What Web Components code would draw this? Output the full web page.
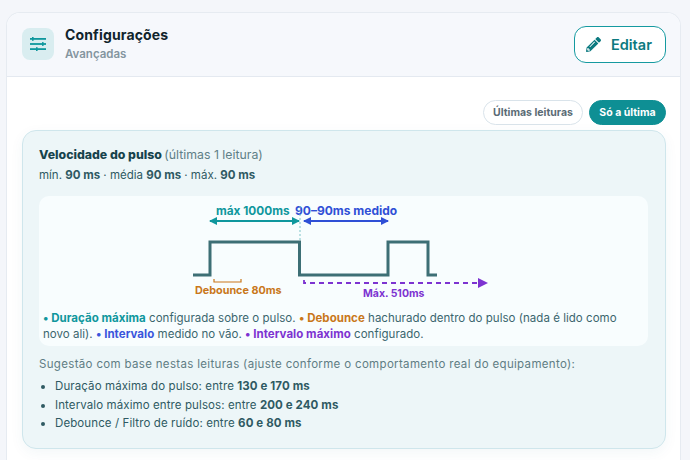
<!doctype html>
<html lang="pt">
<head>
<meta charset="utf-8">
<title>Configurações</title>
<style>
  html, body { margin: 0; height: 100%; overflow: hidden; }
  body {
    background: #f4f6fa;
    font-family: Inter, "Noto Sans", sans-serif;
    color: #1a444c;
    padding: 12px 9px 0 6px;
    box-sizing: border-box;
  }
  b { font-weight: 700; }
</style>
</head>
<body>
<settings-card>
  <card-header slot="header" title="Configurações" subtitle="Avançadas" action="Editar"></card-header>
  <pill-toggle first="Últimas leituras" second="Só a última"></pill-toggle>
  <pulse-panel>
    <span slot="title">Velocidade do pulso</span>
    <span slot="note">(últimas 1 leitura)</span>
    <span slot="stats">mín. <b>90 ms</b> · média <b>90 ms</b> · máx. <b>90 ms</b></span>
    <pulse-diagram slot="diagram"></pulse-diagram>
    <span slot="hint" style="letter-spacing:.33px">Sugestão com base nestas leituras (ajuste conforme o comportamento real do equipamento):</span>
    <ul slot="list" style="margin:0;padding:0 0 0 16px;list-style:disc;letter-spacing:.1px">
      <li style="margin-bottom:2.5px">Duração máxima do pulso: entre <b>130 e 170 ms</b></li>
      <li style="margin-bottom:2.5px">Intervalo máximo entre pulsos: entre <b>200 e 240 ms</b></li>
      <li>Debounce / Filtro de ruído: entre <b>60 e 80 ms</b></li>
    </ul>
  </pulse-panel>
</settings-card>

<script>
class SettingsCard extends HTMLElement {
  constructor() {
    super()
    this.attachShadow({ mode: 'open' })
    this.shadowRoot.innerHTML = `
      <style>
        :host {
          display: block;
          height: 448px;
          box-sizing: border-box;
          background: #fff;
          border: 1px solid #e6ebf1;
          border-bottom: none;
          border-radius: 14px 14px 0 0;
          overflow: hidden;
        }
        header {
          height: 63px;
          background: #f6f8fc;
          border-bottom: 1px solid #e4e9f0;
        }
        main { padding: 23px 14px 0 15px; }
      </style>
      <header><slot name="header"></slot></header>
      <main><slot></slot></main>
    `
  }
}

class CardHeader extends HTMLElement {
  constructor() {
    super()
    this.attachShadow({ mode: 'open' })
    this.shadowRoot.innerHTML = `
      <style>
        :host {
          display: flex;
          align-items: center;
          height: 100%;
          box-sizing: border-box;
          padding: 0 14px 1px 15px;
        }
        .icon {
          width: 32px;
          height: 32px;
          border-radius: 8px;
          background: #d9edf0;
          display: grid;
          place-items: center;
          margin-right: 11px;
        }
        .text { flex: 1; display: flex; flex-direction: column; }
        h1 {
          margin: 0;
          font-size: 14px;
          line-height: 18px;
          font-weight: 700;
          color: #10242c;
          letter-spacing: .15px;
        }
        small {
          margin-top: 3px;
          font-size: 11.5px;
          line-height: 15px;
          font-weight: 600;
          color: #84959f;
        }
        button {
          display: flex;
          align-items: center;
          gap: 10px;
          width: 92px;
          height: 37px;
          padding: 0 0 0 11px;
          box-sizing: border-box;
          background: #fff;
          border: 1.5px solid #159aa0;
          border-radius: 12px;
          font: 600 14.5px Inter, sans-serif;
          color: #0c7a80;
        }
      </style>
      <div class="icon">
        <svg width="18" height="16" viewBox="0 0 18 16" fill="#0f979d">
          <rect x="1" y="2" width="16" height="1.8"/><rect x="3" y="1" width="1.6" height="3.8"/>
          <rect x="1" y="7.100" width="16" height="1.8"/><rect x="13" y="6.100" width="1.6" height="3.800"/>
          <rect x="1" y="12.200" width="16" height="1.8"/><rect x="7" y="11.200" width="1.6" height="3.800"/>
        </svg>
      </div>
      <div class="text">
        <h1>${this.getAttribute('title')}</h1>
        <small>${this.getAttribute('subtitle')}</small>
      </div>
      <button>
        <svg width="15" height="15" viewBox="0 0 512 512" fill="#0c7a80"><path d="M497.9 142.1l-46.1 46.1c-4.7 4.7-12.3 4.7-17 0l-111-111c-4.7-4.7-4.7-12.3 0-17l46.1-46.1c18.7-18.7 49.1-18.7 67.9 0l60.1 60.1c18.8 18.7 18.8 49.1 0 67.9zM284.2 99.8L21.6 362.4.4 483.9c-2.9 16.4 11.4 30.6 27.8 27.8l121.5-21.3 262.6-262.6c4.7-4.7 4.7-12.3 0-17l-111-111c-4.8-4.7-12.4-4.7-17.1 0zM124.1 339.9c-5.5-5.5-5.5-14.3 0-19.8l154-154c5.5-5.5 14.3-5.5 19.8 0s5.5 14.3 0 19.8l-154 154c-5.5 5.5-14.3 5.5-19.8 0zM88 424h48v36.3l-64.5 11.3-31.1-31.1L51.7 376H88v48z"/></svg>
        ${this.getAttribute('action')}
      </button>
    `
  }
}

class PillToggle extends HTMLElement {
  constructor() {
    super()
    this.attachShadow({ mode: 'open' })
    this.shadowRoot.innerHTML = `
      <style>
        :host {
          display: flex;
          justify-content: flex-end;
          gap: 6px;
          margin-bottom: 5px;
        }
        button {
          height: 25px;
          padding: 0;
          border-radius: 13px;
          font: 700 10.5px Inter, sans-serif;
          box-sizing: border-box;
        }
        .off { width: 100px; background: #fff; border: 1px solid #d9e3ea; color: #5a6b75; }
        .on { width: 77px; background: #0e8f94; border: 1px solid #0e8f94; color: #fff; }
      </style>
      <button class="off">${this.getAttribute('first')}</button>
      <button class="on">${this.getAttribute('second')}</button>
    `
  }
}

class PulsePanel extends HTMLElement {
  constructor() {
    super()
    this.attachShadow({ mode: 'open' })
    this.shadowRoot.innerHTML = `
      <style>
        :host {
          display: block;
          box-sizing: border-box;
          height: 319px;
          padding: 15px 17px 0 16px;
          background: #edf6f8;
          border: 1px solid #cfe6ec;
          border-radius: 14px;
          box-shadow: 0 4px 14px rgba(20, 90, 110, .05);
          font-size: 11.5px;
          color: #2f5a63;
        }
        .title { line-height: 18px; font-size: 12.3px; }
        .title ::slotted(span[slot=title]) { font-weight: 800; color: #16434c; }
        .title ::slotted(span[slot=note]) { color: #5f8087; font-size: 12.3px; margin-left: -1px; }
        .stats { margin-top: 2px; line-height: 18px; }
        .diagram { margin-top: 12px; }
        .hint { margin-top: 9px; line-height: 18px; color: #5f7d84; }
        .list { margin-top: 5px; line-height: 16px; color: #2f5a63; }
      </style>
      <div class="title"><slot name="title"></slot> <slot name="note"></slot></div>
      <div class="stats"><slot name="stats"></slot></div>
      <div class="diagram"><slot name="diagram"></slot></div>
      <div class="hint"><slot name="hint"></slot></div>
      <div class="list"><slot name="list"></slot></div>
    `
  }
}

class PulseDiagram extends HTMLElement {
  constructor() {
    super()
    this.attachShadow({ mode: 'open' })
    this.shadowRoot.innerHTML = `
      <style>
        :host {
          display: block;
          background: #f8fdfe;
          border-radius: 10px;
          height: 150px;
          box-sizing: border-box;
        }
        svg { display: block; }
        text { font: 700 11px Inter, sans-serif; }
        p {
          margin: 0;
          padding: 5px 4px 0 4px;
          font-size: 11.5px;
          line-height: 16px;
          letter-spacing: .03px;
          color: #3b666e;
        }
        .t { color: #0f979d; font-weight: 700; }
        .o { color: #c9771a; font-weight: 700; }
        .bl { color: #3a55dc; font-weight: 700; }
        .p { color: #7d33d1; font-weight: 700; }
      </style>
      <svg width="609" height="109" viewBox="39 196 609 109">
        <defs>
          <marker id="teal" viewBox="0 0 8 8" refX="7" refY="4" markerWidth="8" markerHeight="8" orient="auto-start-reverse" markerUnits="userSpaceOnUse"><path d="M0 0L8 4L0 8z" fill="#0f979d"/></marker>
          <marker id="blue" viewBox="0 0 8 8" refX="7" refY="4" markerWidth="8" markerHeight="8" orient="auto-start-reverse" markerUnits="userSpaceOnUse"><path d="M0 0L8 4L0 8z" fill="#2f4fd6"/></marker>
          <marker id="purple" viewBox="0 0 10 10" refX="9" refY="5" markerWidth="10" markerHeight="10" orient="auto" markerUnits="userSpaceOnUse"><path d="M0 0L10 5L0 10z" fill="#7d33d1"/></marker>
        </defs>
        <text x="216" y="215" fill="#0f979d" style="font-size:11.800px">máx 1000ms</text>
        <text x="295" y="215" fill="#2f4fd6" style="font-size:12px">90–90ms medido</text>
        <line x1="210" y1="221" x2="299" y2="221" stroke="#0f979d" stroke-width="2" marker-start="url(#teal)" marker-end="url(#teal)"/>
        <line x1="304" y1="221" x2="388" y2="221" stroke="#2f4fd6" stroke-width="2" marker-start="url(#blue)" marker-end="url(#blue)"/>
        <line x1="300" y1="206" x2="300" y2="242" stroke="#7fc4c8" stroke-width="1" stroke-dasharray="2 2"/>
        <path d="M193 275H210V242H299.500V275H388V242H428V275H437" fill="none" stroke="#3d6f75" stroke-width="3"/>
        <path d="M214 279V282H241V279" fill="none" stroke="#c9771a" stroke-width="1.200"/>
        <text x="195" y="294" fill="#c9771a" style="font-size:10.800px">Debounce 80ms</text>
        <path d="M304 280V283H487" fill="none" stroke="#7d33d1" stroke-width="1.800" stroke-dasharray="5 4" marker-end="url(#purple)"/>
        <text x="363" y="297" fill="#7d33d1" style="font-size:10.500px">Máx. 510ms</text>
      </svg>
      <p><span class="t">• Duração máxima</span> configurada sobre o pulso. <span class="o">• Debounce</span> hachurado dentro do pulso (nada é lido como<br>novo ali). <span class="bl">• Intervalo</span> medido no vão. <span class="p">• Intervalo máximo</span> configurado.</p>
    `
  }
}

customElements.define('settings-card', SettingsCard)
customElements.define('card-header', CardHeader)
customElements.define('pill-toggle', PillToggle)
customElements.define('pulse-panel', PulsePanel)
customElements.define('pulse-diagram', PulseDiagram)
</script>
</body>
</html>
